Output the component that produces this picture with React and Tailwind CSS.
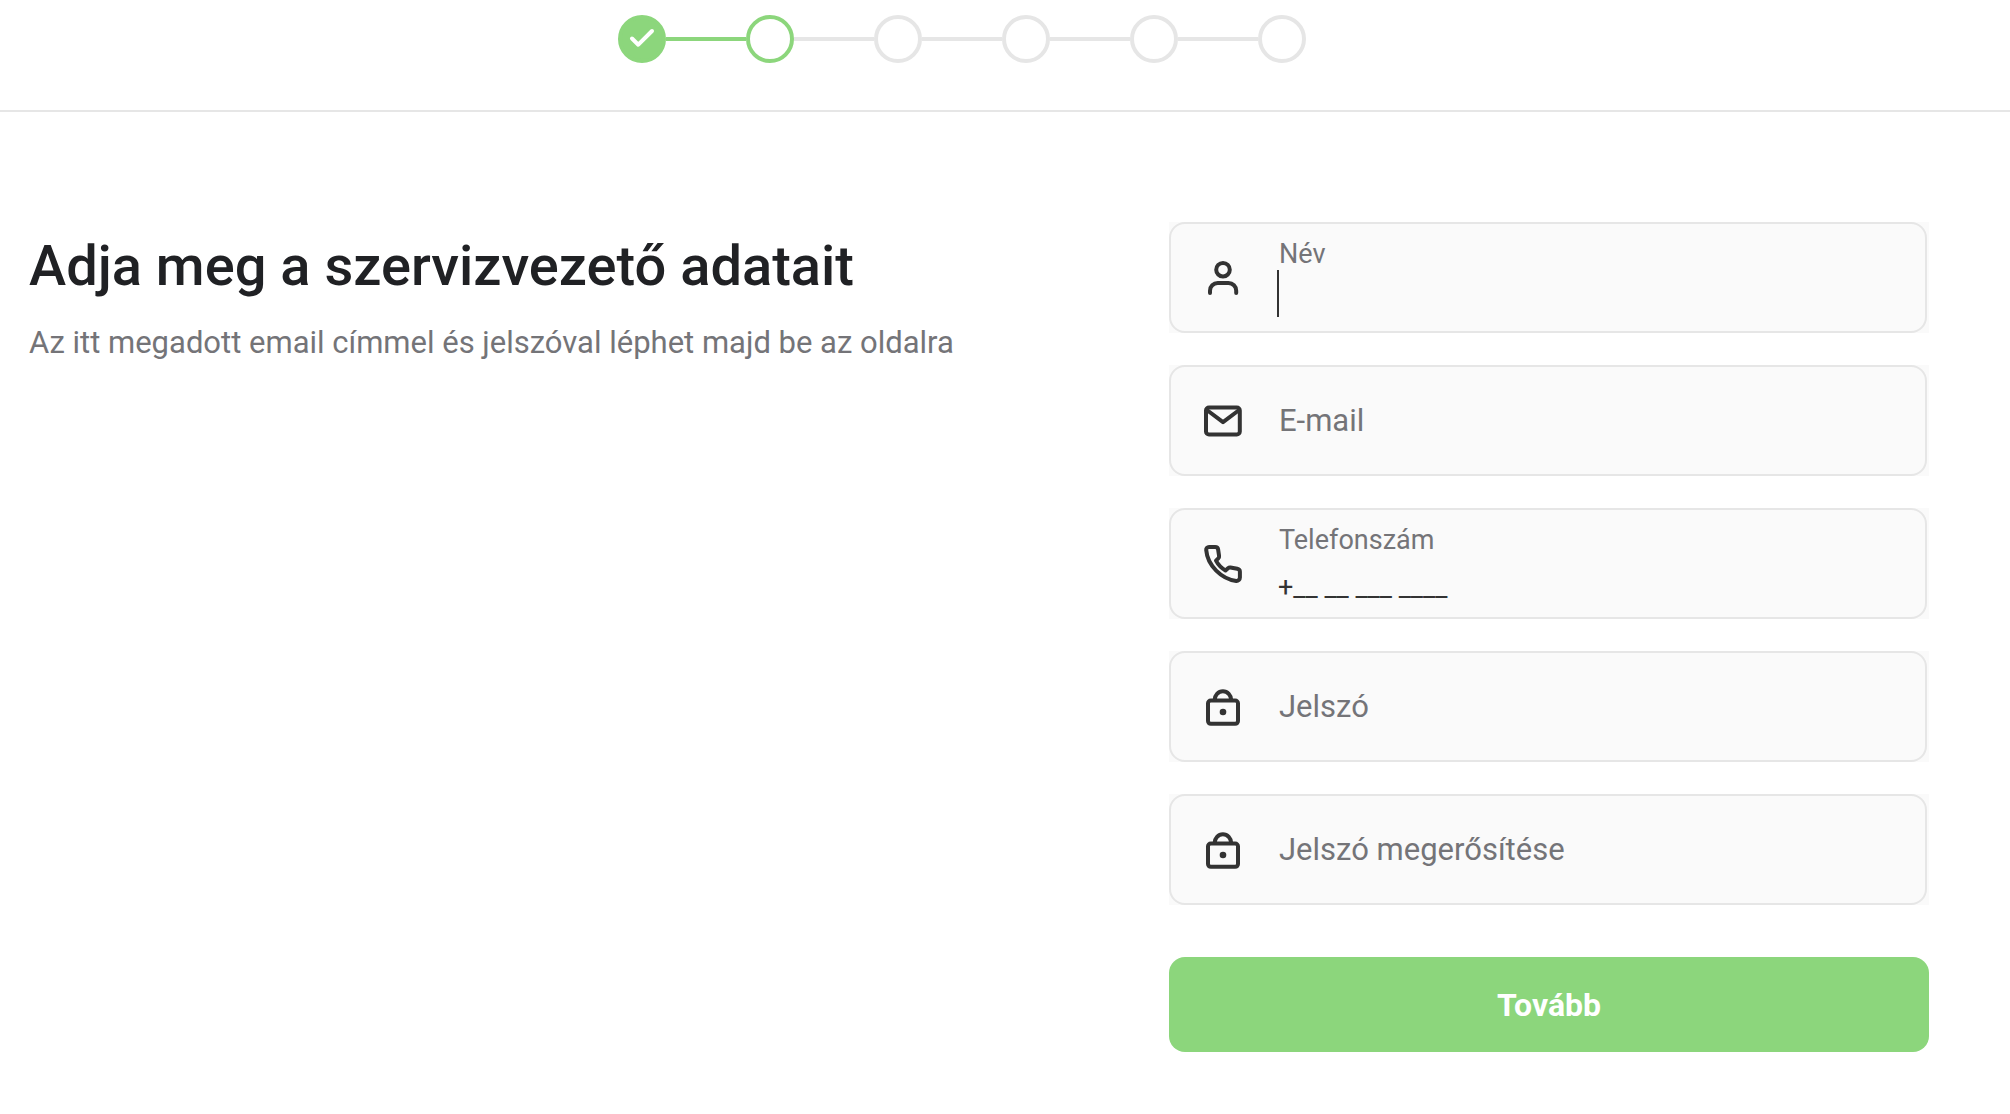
import React, { useState } from 'react';

const steps = ['done', 'current', 'todo', 'todo', 'todo', 'todo'];

const stepStyles = {
  done: 'border-[#8cd67c] bg-[#8cd67c]',
  current: 'border-[#8cd67c]',
  todo: 'border-[#e6e6e6]',
};

const Icon = ({ children }) => (
  <svg
    viewBox="0 0 40 40"
    className="size-10 shrink-0"
    fill="none"
    stroke="#333333"
    strokeWidth="4"
    strokeLinecap="round"
    strokeLinejoin="round"
    aria-hidden="true"
  >
    {children}
  </svg>
);

const UserIcon = () => (
  <Icon>
    <circle cx="20" cy="11.7" r="6.8" />
    <path d="M7 35v-2.3a7.7 7.7 0 0 1 7.7-7.7h10.8a7.7 7.7 0 0 1 7.7 7.7V35" />
  </Icon>
);

const MailIcon = () => (
  <Icon>
    <rect x="3" y="6.6" width="33.8" height="26.8" rx="3" />
    <path d="M4.5 9.5 20 21.2 35.5 9.5" />
  </Icon>
);

const PhoneIcon = () => (
  <Icon>
    <path d="M6 3h6.2c1.5 0 2.7 1 2.9 2.4l1 6.6c.1.9-.2 1.700-.8 2.300L13 16.600c2.200 4.200 5.300 7.400 9.500 9.800l2.500-2.200c.7-.6 1.500-.8 2.400-.7l6.900 1.200c1.500.3 2.600 1.500 2.600 3v5.900c0 2-1.700 3.500-3.700 3.300C18.500 35 4.500 21.500 3.200 6 3 4.400 4.300 3 6 3z" />
  </Icon>
);

const LockIcon = () => (
  <Icon>
    <rect x="5" y="13.5" width="30" height="23.3" rx="2.8" />
    <path d="M11.6 13a8.3 8.8 0 0 1 16.6 0" />
    <circle cx="20" cy="25" r="3.3" fill="#333333" stroke="none" />
  </Icon>
);

const fields = [
  { id: 'name', label: 'Név', type: 'text', icon: UserIcon, focused: true },
  { id: 'email', label: 'E-mail', type: 'email', icon: MailIcon },
  { id: 'phone', label: 'Telefonszám', type: 'tel', icon: PhoneIcon, mask: '+__ __ ___ ____' },
  { id: 'password', label: 'Jelszó', type: 'password', icon: LockIcon },
  { id: 'password-confirm', label: 'Jelszó megerősítése', type: 'password', icon: LockIcon },
];

function Stepper() {
  return (
    <ol className="flex items-center">
      {steps.map((step, i) => (
        <li key={i} className="flex items-center">
          {i > 0 && (
            <span className={`h-1 w-20 ${step === 'todo' ? 'bg-[#e6e6e6]' : 'bg-[#8cd67c]'}`} />
          )}
          <span className={`flex size-12 items-center justify-center rounded-full border-4 ${stepStyles[step]}`}>
            {step === 'done' && (
              <svg
                viewBox="4 4 40 40"
                className="size-10"
                fill="none"
                stroke="white"
                strokeWidth="4"
                strokeLinecap="round"
                strokeLinejoin="round"
                aria-hidden="true"
              >
                <path d="M14 23.5 20.3 29.7 34 16" />
              </svg>
            )}
          </span>
        </li>
      ))}
    </ol>
  );
}

function Field({ id, label, type, icon: FieldIcon, mask, focused }) {
  const [value, setValue] = useState(mask || '');
  const floating = focused || value !== '';

  return (
    <div className="bg-[#fafafa] pr-0.5">
      <div className="flex items-center gap-[34px] rounded-2xl border-2 border-[#e6e6e6] px-8 py-3.5">
        <FieldIcon />
        {floating ? (
          <div className="min-w-0 flex-1">
            <label htmlFor={id} className="block pl-0.5 text-[27px] leading-8 text-[#747478]">
              {label}
            </label>
            <div className="flex h-[47px] items-end">
              {/* Text cursor */}
              {focused && <span className="h-full w-0.5 bg-[#333333]" />}
              <input
                id={id}
                type={type}
                value={value}
                onChange={(e) => setValue(e.target.value)}
                className="h-8 w-full bg-transparent pl-px text-[27px] leading-8 text-[#333333] caret-transparent outline-none"
              />
            </div>
          </div>
        ) : (
          <div className="grid h-[79px] min-w-0 flex-1 items-center">
            <label htmlFor={id} className="col-start-1 row-start-1 pl-0.5 text-[31px] leading-9 text-[#747478]">
              {label}
            </label>
            <input
              id={id}
              type={type}
              value={value}
              onChange={(e) => setValue(e.target.value)}
              className="col-start-1 row-start-1 h-full w-full bg-transparent text-[27px] text-[#333333] outline-none"
            />
          </div>
        )}
      </div>
    </div>
  );
}

export default function App() {
  return (
    <div className="min-h-screen bg-white font-['Roboto',sans-serif]">
      <header className="flex h-28 justify-center border-b-2 border-[#e6e6e6] pt-[15px] pr-[86px]">
        <nav aria-label="Lépések">
          <Stepper />
        </nav>
      </header>

      <main className="flex items-start justify-between pt-[110px] pr-[81px] pb-[62px] pl-[29px]">
        <div className="pt-3">
          <h1 className="text-[56px] leading-16 font-medium text-[#202124]">
            Adja meg a szervizvezető adatait
          </h1>
          <p className="mt-6 text-[31px] leading-[42px] text-[#747478]">
            Az itt megadott email címmel és jelszóval léphet majd be az oldalra
          </p>
        </div>

        <form className="w-2/5" onSubmit={(e) => e.preventDefault()}>
          <div className="flex flex-col gap-8">
            {fields.map((field) => (
              <Field key={field.id} {...field} />
            ))}
          </div>
          <button
            type="submit"
            className="mt-[52px] h-[95px] w-full rounded-2xl bg-[#8cd67c] text-[32px] font-bold text-white"
          >
            Tovább
          </button>
        </form>
      </main>
    </div>
  );
}
